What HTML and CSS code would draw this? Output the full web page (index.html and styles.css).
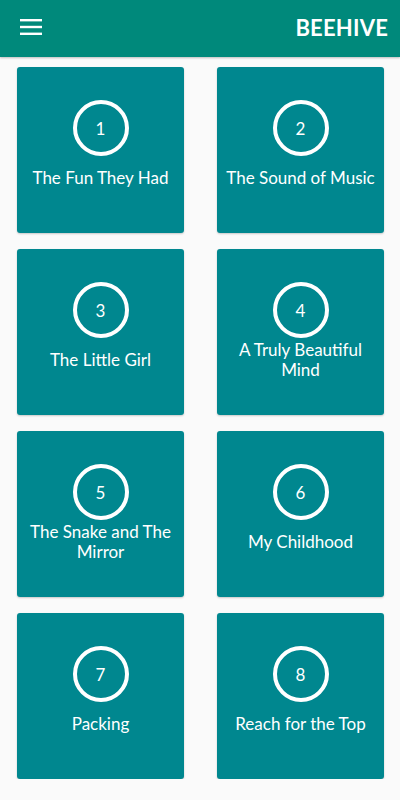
FILE: index.html
```html
<!DOCTYPE html>
<html><head><meta charset="utf-8"/>
<meta name="viewport" content="width=device-width, initial-scale=1.0"/>
<title>Beehive</title>
<link rel="stylesheet" href="styles.css">
</head>
<body>

<div class="bar">
  <svg class="menu" width="22" height="16" viewBox="0 0 22 16">
    <rect x="0" y="0" width="22" height="2.4" fill="white"/>
    <rect x="0" y="6.8" width="22" height="2.4" fill="white"/>
    <rect x="0" y="13.6" width="22" height="2.4" fill="white"/>
  </svg>
  <div class="title">BEEHIVE</div>
</div>

<div class="grid">
  <div class="card"><div class="num">1</div><div class="name">The Fun They Had</div></div>
  <div class="card"><div class="num">2</div><div class="name">The Sound of Music</div></div>
  <div class="card"><div class="num">3</div><div class="name">The Little Girl</div></div>
  <div class="card"><div class="num">4</div><div class="name">A Truly Beautiful Mind</div></div>
  <div class="card"><div class="num">5</div><div class="name">The Snake and The Mirror</div></div>
  <div class="card"><div class="num">6</div><div class="name">My Childhood</div></div>
  <div class="card"><div class="num">7</div><div class="name">Packing</div></div>
  <div class="card"><div class="num">8</div><div class="name">Reach for the Top</div></div>
</div>

</body>
</html>
```

FILE: styles.css
```css
body {
  font-family: Lato, "Noto Sans", sans-serif;
  margin: 0;
  background-color: #fafafa;
  --bar-color: #00897b;
  --card-color: #00878f;
}
.bar {
  height: 57px;
  background-color: var(--bar-color);
  display: flex;
  align-items: center;
  justify-content: space-between;
  padding: 0 12px 0 20px;
  box-shadow: 0 1px 2px rgba(0, 0, 0, .25);
}
.menu {
  display: block;
  margin-top: -4px;
}
.title {
  color: white;
  font-weight: bold;
  font-size: 22px;
  letter-spacing: .2px;
  margin-top: -3px;
}
.grid {
  display: grid;
  grid-template-columns: 167px 167px;
  column-gap: 33px;
  row-gap: 16px;
  padding: 10px 16px 0 17px;
}
.card {
  height: 166px;
  background-color: var(--card-color);
  border-radius: 3px;
  box-shadow: 0 1px 2px rgba(0, 0, 0, .2);
  display: flex;
  flex-direction: column;
  align-items: center;
  color: white;
}
.num {
  width: 48px;
  height: 48px;
  margin-top: 33px;
  border: 4px solid white;
  border-radius: 50%;
  display: flex;
  align-items: center;
  justify-content: center;
  font-size: 17px;
}
.name {
  height: 44px;
  display: flex;
  align-items: center;
  text-align: center;
  font-size: 17px;
  line-height: 20px;
  padding: 0 4px;
}
```
